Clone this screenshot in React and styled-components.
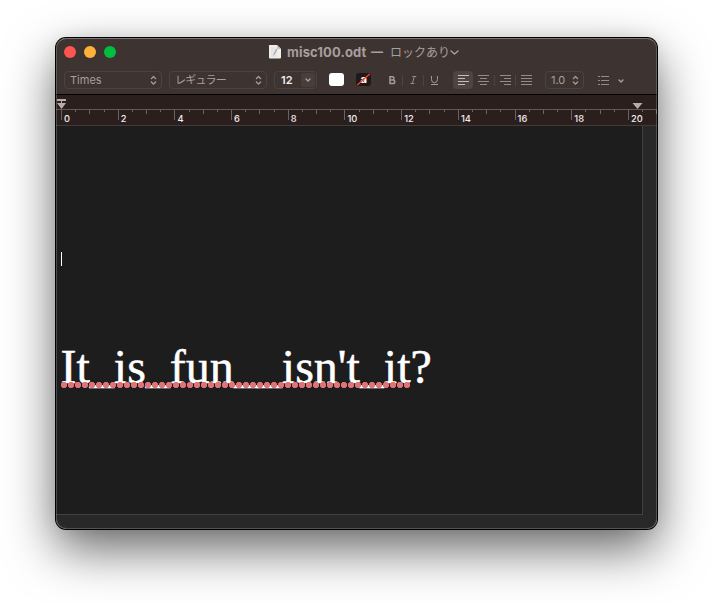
import React from "react";
import styled, { createGlobalStyle } from "styled-components";

const Global = createGlobalStyle`
  *, *::before, *::after { box-sizing: border-box; }
  body { margin: 0; background: #fff; overflow: hidden; }
`;

const Desktop = styled.div`
  width: 713px;
  height: 603px;
  padding: 38px 56px 0;
  font-family: Inter, "Noto Sans CJK JP", sans-serif;
  color: #a89f9e;
`;

const Window = styled.main`
  position: relative;
  display: flex;
  flex-direction: column;
  width: 601px;
  height: 491px;
  border-radius: 10px;
  overflow: hidden;
  background: #282828;
`;

const Shadow = styled.div`
  border-radius: 10px;
  width: 601px;
  height: 491px;
  box-shadow: 0 0 0 1px #000, 0 20px 50px rgba(0, 0, 0, 0.6), 0 0 18px rgba(0, 0, 0, 0.08);
`;

const Rim = styled.div`
  position: absolute;
  inset: 0;
  border-radius: 10px;
  border: 1px solid rgba(255, 255, 255, 0.2);
  border-top-color: rgba(255, 255, 255, 0.32);
  pointer-events: none;
`;

const TitleBar = styled.header`
  display: grid;
  grid-template-columns: 212px 1fr;
  height: 28px;
  background: #3d3330;
`;

const Lights = styled.div`
  display: flex;
  gap: 8px;
  padding: 8px 0 0 8px;
`;

const Light = styled.span`
  width: 12px;
  height: 12px;
  border-radius: 50%;
  background: ${(p) => p.$color};
`;

const Title = styled.div`
  display: flex;
  align-items: center;
  height: 28px;
  padding-bottom: 1px;
  white-space: pre;
`;

const FileName = styled.span`
  width: 80px;
  margin-left: 5px;
  font-size: 13px;
  line-height: 16px;
  font-weight: 700;
  letter-spacing: 0.12px;
`;

const Dash = styled.span`
  width: 23px;
  padding-left: 4px;
  font-size: 12px;
  font-weight: 700;
`;

const Locked = styled.span`
  width: 60px;
  font-size: 12px;
  line-height: 16px;
  font-family: "Noto Sans CJK JP", sans-serif;
`;

const Toolbar = styled.nav`
  display: flex;
  height: 29px;
  padding: 5px 0 0 8px;
  background: #3d3330;
  border-bottom: 1px solid #000;
`;

const Select = styled.div`
  display: flex;
  flex: none;
  align-items: center;
  justify-content: space-between;
  width: ${(p) => p.$width}px;
  height: 18px;
  margin-right: ${(p) => p.$gap}px;
  padding: 0 4px 1px 5px;
  border: 1px solid #4c4240;
  border-radius: 4px;
  font-size: 11px;
  line-height: 16px;
  letter-spacing: ${(p) => p.$spacing || "0"};
  white-space: nowrap;
`;

const SizeBox = styled(Select)`
  padding: 0 1px 0 6px;
  color: #f0eeee;
  font-weight: 600;
`;

const DropCap = styled.span`
  display: grid;
  place-items: center;
  width: 14px;
  height: 14px;
  border-radius: 3px;
  background: #483e3b;
`;

const Swatch = styled.span`
  display: grid;
  flex: none;
  place-items: center;
  width: 15px;
  height: 13px;
  margin: 2px ${(p) => p.$gap}px 0 0;
  border-radius: 3px;
  background: ${(p) => p.$color};
`;

const Tool = styled.span`
  display: grid;
  flex: none;
  place-items: center;
  width: ${(p) => p.$width || 20}px;
  height: ${(p) => p.$height || 18}px;
  border-radius: 4px;
  background: ${(p) => (p.$active ? "#4e4542" : "transparent")};
`;

const Gap = styled.span`
  flex: none;
  width: ${(p) => p.$width}px;
`;

const Divider = styled.i`
  flex: none;
  width: 1px;
  height: 11px;
  margin-top: 4px;
  background: #4e4542;
`;

const Ruler = styled.section`
  height: 31px;
  background: #2b1f1d;
  border-bottom: 1px solid #433b39;

  svg { display: block; }
`;

const Editor = styled.section`
  width: 587px;
  height: 389px;
  padding: 126px 0 0 5px;
  background: #1d1d1d;
  border: solid #414141;
  border-width: 0 1px 1px 0;
`;

const Caret = styled.div`
  width: 1px;
  height: 14px;
  background: #fff;
`;

const Line = styled.div`
  position: relative;
  width: 400px;
  margin: 73px 0 0 -0.5px;
  font-family: "Liberation Serif", "Times New Roman", serif;
  font-size: 48px;
  line-height: 56px;
  color: #fff;
  -webkit-text-stroke: 0.5px #fff;
  white-space: pre;
`;

const Blank = styled.span`
  vertical-align: 1px;
  line-height: 0;
`;

const Spelling = styled.div`
  position: absolute;
  left: 0.5px;
  top: 43px;
  width: 350px;
  height: 6px;
  background: radial-gradient(circle at 3px 3px, #df7375 2.8px, transparent 3.5px) 0 0 / 7px 6px repeat-x;
`;

const Stepper = () => (
  <svg width="7" height="10" viewBox="0 0 7 10" fill="none" stroke="#aaa19f" strokeWidth="1.3" strokeLinecap="round" strokeLinejoin="round">
    <path d="M1.4 3.6 3.5 1.5 5.6 3.6M1.4 7 3.5 9.1 5.6 7" />
  </svg>
);

const Chevron = ({ width = 6 }) => (
  <svg width={width} height="6" viewBox={`0 0 ${width} 6`} fill="none" stroke="#aaa19f" strokeWidth="1.4" strokeLinecap="round" strokeLinejoin="round">
    <path d={`M1 2 ${width / 2} ${width > 6 ? 5 : 4} ${width - 1} 2`} />
  </svg>
);

const Document = () => (
  <svg width="14" height="16" viewBox="0 0 14 16">
    <path d="M1.5 1H9l4 4v8.5a1 1 0 0 1-1 1H2a1 1 0 0 1-1-1v-12Z" fill="#eeeeed" />
    <path d="M9 1v3a1 1 0 0 0 1 1h3Z" fill="#c7c5c4" />
    <path d="M3 4h4M3 6h6M3 8h6M3 10h5M3 12h6" stroke="#cfd3d1" strokeWidth=".7" />
    <path d="m5.2 12.2.6-2.5 2.7-5.2 1.1.6-2.7 5Z" fill="#a2a3a1" />
  </svg>
);

const alignRows = {
  left: [[0, 11], [0, 7], [0, 11], [0, 7]],
  center: [[0, 11], [2, 7], [0, 11], [2, 7]],
  right: [[0, 11], [4, 7], [0, 11], [4, 7]],
  justify: [[0, 11], [0, 11], [0, 11], [0, 11]],
};

const Align = ({ kind }) => (
  <svg width="11" height="10" viewBox="0 0 11 10" fill={kind === "left" ? "#c5bdbc" : "#958b89"}>
    {alignRows[kind].map(([x, w], i) => <rect key={i} x={x} y={i * 3} width={w} height="1" />)}
  </svg>
);

const numerals = Array.from({ length: 11 }, (_, i) => i * 2);
const ticks = Array.from({ length: 43 }, (_, i) => i);

export default function App() {
  return (
    <Desktop>
      <Global />
      <Shadow>
        <Window>
          <TitleBar>
            <Lights>
              <Light $color="#ff544f" />
              <Light $color="#ffb13b" />
              <Light $color="#00bf3f" />
            </Lights>
            <Title>
              <Document />
              <FileName>misc100.odt</FileName>
              <Dash>—</Dash>
              <Locked>ロックあり</Locked>
              <Chevron width={9} />
            </Title>
          </TitleBar>
          <Toolbar>
            <Select $width={98} $gap={7}>Times <Stepper /></Select>
            <Select $width={98} $gap={7} $spacing="-0.8px">レギュラー <Stepper /></Select>
            <SizeBox $width={43} $gap={12}>12 <DropCap><Chevron /></DropCap></SizeBox>
            <Swatch $color="#fff" $gap={12} />
            <Swatch $color="#1d1a19" $gap={11}>
              <svg width="15" height="13" viewBox="0 0 15 13">
                <text x="7.7" y="10" textAnchor="middle" fontFamily="Inter, sans-serif" fontSize="11" fontWeight="800" fill="#fff">a</text>
                <path d="m1.3 12 12.4-11" stroke="#ff3b30" strokeWidth="1.3" />
              </svg>
            </Swatch>
            <Tool $height={17}>
              <svg width="9" height="10" fill="none" stroke="#a49b99" strokeWidth="1.5"><path d="M2 1.7h2.7a1.7 1.7 0 0 1 0 3.3H2m0 0h3a1.8 1.8 0 0 1 0 3.6H2V1" /></svg>
            </Tool>
            <Divider />
            <Tool $height={17}>
              <svg width="9" height="10" fill="none" stroke="#958b89"><path d="M3.3 1.5h4M1.4 8.5h4M5.4 1.5 3.3 8.5" /></svg>
            </Tool>
            <Divider />
            <Tool $width={21} $height={18}>
              <svg width="9" height="11" fill="none" stroke="#a49b99"><path d="M1.5 1v3.7a2.8 2.8 0 0 0 5.9 0V1M1 9.5h7" /></svg>
            </Tool>
            <Gap $width={8} />
            <Tool $active><Align kind="left" /></Tool>
            <Tool $width={21}><Align kind="center" /></Tool>
            <Divider />
            <Tool><Align kind="right" /></Tool>
            <Divider />
            <Tool $width={21}><Align kind="justify" /></Tool>
            <Gap $width={8} />
            <Select $width={39} $gap={13}>1.0 <Stepper /></Select>
            <Tool $width={14} $height={19}>
              <svg width="12" height="9" fill="#958b89">
                {[0, 4, 8].map((y) => <g key={y}><rect x="0" y={y} width="2" height="1" /><rect x="3" y={y} width="8" height="1" /></g>)}
              </svg>
            </Tool>
            <Tool $width={20} $height={19}><Chevron /></Tool>
          </Toolbar>
          <Ruler>
            <svg width="601" height="30" fontFamily="Inter, sans-serif" fontSize="9.3" fontWeight="500">
              <rect y="14" width="601" height="1" fill="#615856" />
              {ticks.map((n) => (
                <rect key={n} x={Math.floor(5.5 + n * 14.173)} y="15" width="1" height={n % 4 === 0 ? 10 : n % 2 === 0 ? 4 : 2} fill="#6b6260" />
              ))}
              {numerals.map((n) => (
                <text key={n} x={8 + n * 28.35} y="27" fill="#f0eded">{n}</text>
              ))}
              <path d="M1 4h9v2H6v2h4L5.5 14 1 8h4V6H1Z" fill="#b6acaa" />
              <path d="M576.5 8h10L581.5 14Z" fill="#b6acaa" />
            </svg>
          </Ruler>
          <Editor>
            <Caret />
            <Line>
              It<Blank>_</Blank>is<Blank>_</Blank>fun<Blank>__</Blank>isn't<Blank>_</Blank>it?
              <Spelling />
            </Line>
          </Editor>
          <Rim />
        </Window>
      </Shadow>
    </Desktop>
  );
}
